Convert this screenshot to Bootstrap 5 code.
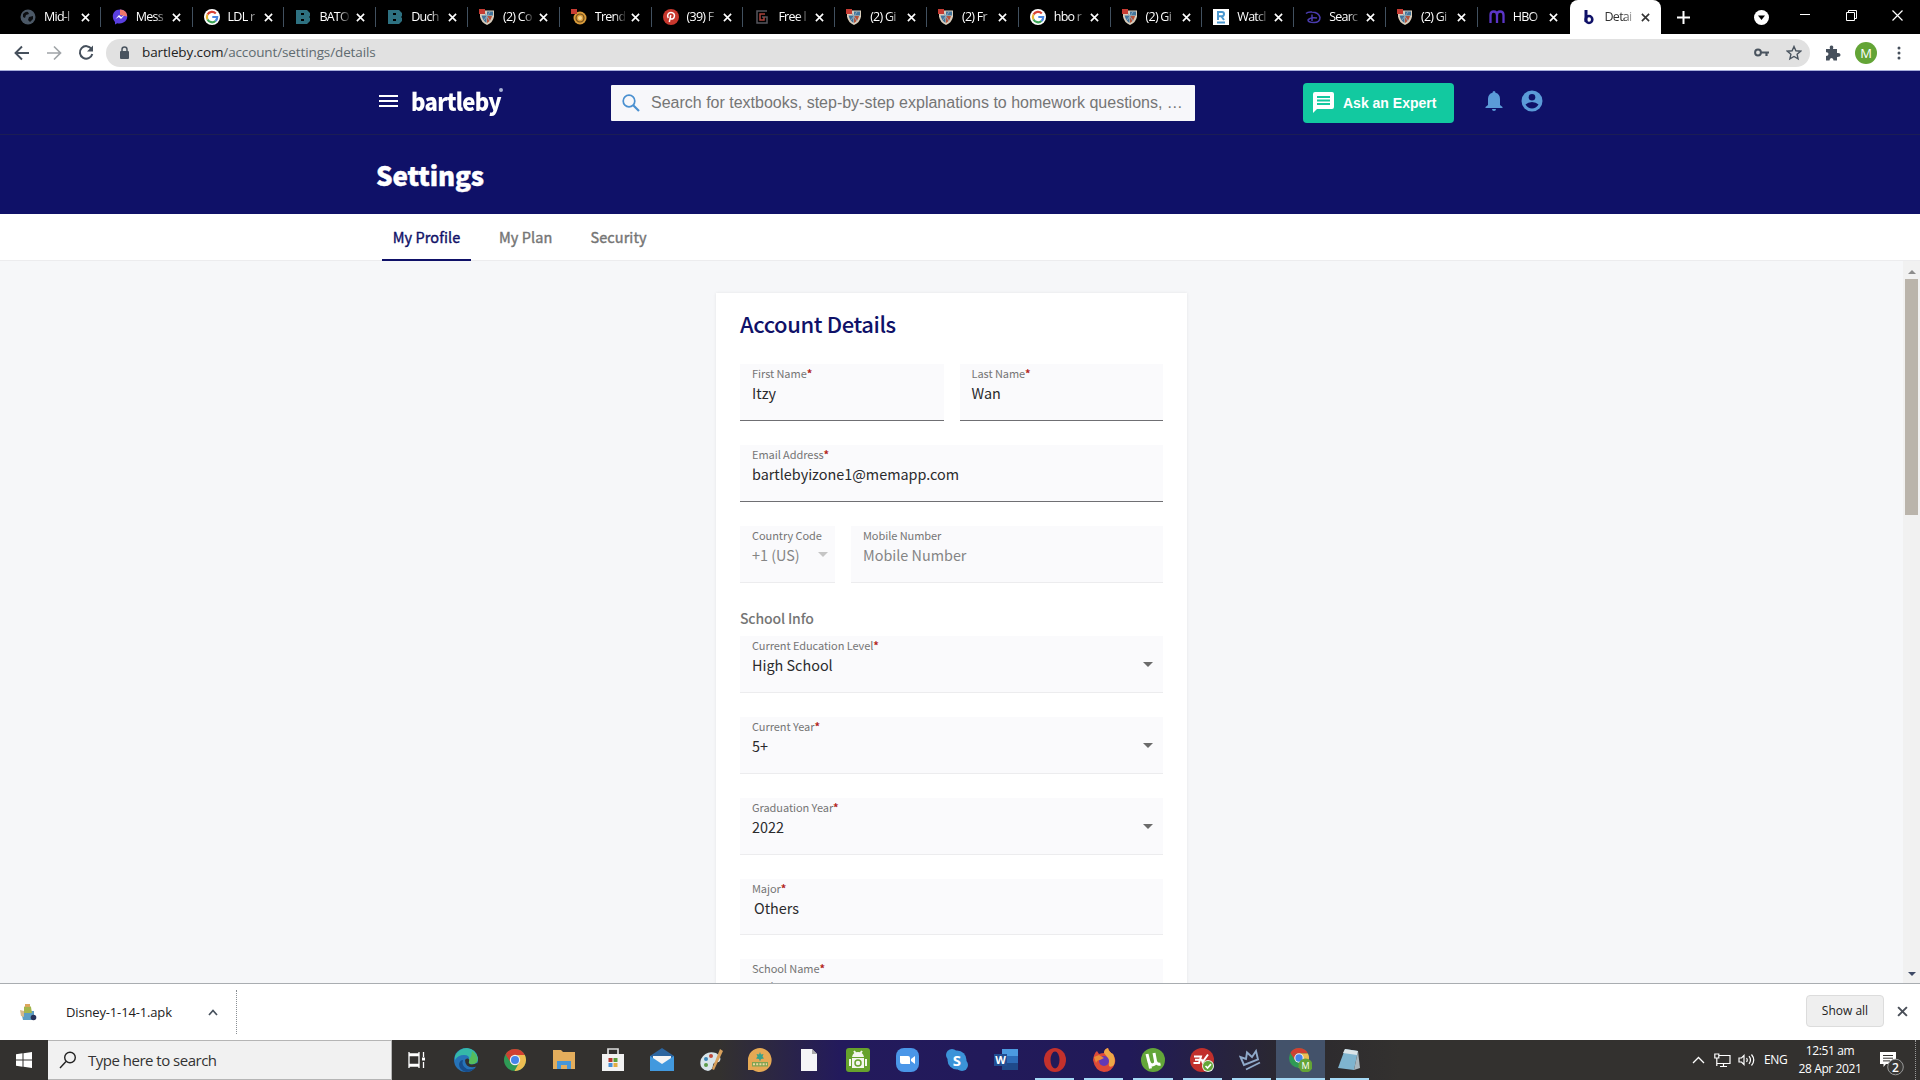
<!DOCTYPE html>
<html lang="en">
<head>
  <meta charset="UTF-8">
  <title>Details | bartleby</title>
  <link href="https://cdn.jsdelivr.net/npm/bootstrap@5.3.2/dist/css/bootstrap.min.css" rel="stylesheet">
  <style>
    body{width:1920px;height:1080px;overflow:hidden;background:#f6f7f9;font-family:"Noto Sans CJK SC",sans-serif;color:#222}
    svg{display:block;flex:none}
    .ui{font-family:"Open Sans","Noto Sans",sans-serif}

    /* browser */
    .tabstrip{height:34px;background:#000;padding-left:9px}
    .btab{width:91.8px;height:34px;padding-left:11px;color:#fff;font-size:12.5px;letter-spacing:-.75px;position:relative}
    .btab .fav{width:16px;height:16px;margin-right:8px}
    .btab .ttl{width:30px;height:20px;line-height:20px;overflow:hidden;white-space:nowrap;-webkit-mask-image:linear-gradient(90deg,#000 65%,rgba(0,0,0,.15));mask-image:linear-gradient(90deg,#000 65%,rgba(0,0,0,.15))}
    .btab .cls{margin-left:6.500px}
    .btab::after{content:"";position:absolute;right:0;top:7px;height:20px;width:1px;background:#41505f}
    .btab.on{background:#fff;color:#333;border-radius:8px 8px 0 0}
    .btab.on::after,.btab.last::after{display:none}
    .winbtns{padding-right:17px}
    .toolbar{height:37px;background:#fff;border-bottom:1px solid #a5addb;padding:1px 12px 0}
    .omni{width:1704px;height:28px;border-radius:14px;background:#e1e1e1;padding:0 8px 0 12px;font-size:13.5px;letter-spacing:-.12px;color:#5f6b70;margin-left:10px}
    .omni b{font-weight:400;color:#222}
    .avatar{width:22px;height:22px;border-radius:50%;background:#63a436;color:#fff;font-size:13px;line-height:22px}

    /* site */
    .sitehead{height:64px;background:#0f1168;border-bottom:1px solid #1b1d55;padding-left:379px}
    .logo{width:92px;height:30px;font-size:24px;font-weight:900;letter-spacing:-.8px;line-height:25px;color:#fff}
    .logo i{width:4px;height:4px;border-radius:50%;background:#a9b4d6}
    .logo span{transform:scaleX(.92);transform-origin:0 50%;width:88px}
    .sitesearch{width:584px;height:36px;background:#f7f7fa;border-radius:1px;font:16px/36px "Liberation Sans",sans-serif;color:#757575;padding-left:11px}
    .ask{width:151px;height:40px;border-radius:4px;background:#12c9a0;color:#fff;font:bold 14px "Liberation Sans",sans-serif;padding-left:10px}
    .titlebar{height:79px;background:#0f1168;padding-left:376px;font-size:26px;font-weight:900;line-height:80px;letter-spacing:-.15px;color:#fff;-webkit-text-stroke:.4px #fff}
    .subnav{height:47px;background:#fff;border-bottom:1px solid #ececee;padding-left:382px;font-size:14.5px;line-height:46px;color:#757575}
    .subnav a{color:inherit;text-decoration:none;-webkit-text-stroke:.4px currentColor;height:47px;white-space:nowrap;letter-spacing:.08px}
    .subnav .cur{color:#0f1168;width:89px;border-bottom:2px solid #0f1168}
    .page{height:722px;overflow:hidden}
    .panel{width:471px;height:760px;margin:32px 0 0 716px;background:#fff;padding:11px 24px 0;box-shadow:0 0 3px rgba(0,0,0,.08)}
    .panel h1{font-size:22px;font-weight:500;line-height:38px;letter-spacing:-.4px;color:#0f1168;margin:0 0 22px}
    .panel h2{font-size:14px;font-weight:500;line-height:20px;letter-spacing:-.15px;color:#757575;margin:0 0 8px;padding-top:1px}
    .fld{height:57px;background:#fafafc;border-bottom:1px solid #ececee;padding-left:12px;position:relative;margin-bottom:24px}
    .fld.dark{border-bottom-color:#6f6f73}
    .fld.low{height:56px}
    .fld.low label{line-height:17px;padding-top:.5px}
    .fld label{display:block;font-size:11px;line-height:18px;letter-spacing:-.06px;color:#757575}
    .fld label i{color:#b3261e;font-style:normal;font-weight:700}
    .fld div{font-size:14.4px;line-height:21px;color:#2a2a2c;white-space:nowrap}
    .fld.off div{color:#858585}
    .fld svg{position:absolute;right:10px;top:26px}
    .sbar{width:17px;background:#f1f1f1;padding:8px 0 6px}
    .sbar .thumb{width:13px;height:236px;background:#bab4ab;margin-top:5px}

    /* bottom */
    .dlbar{height:57px;background:#fff;border-top:1px solid #a9adb1;font-size:13px;color:#222}
    .dlbar .item{width:237px;height:44px;border-right:1px dotted #8a8f94;padding-left:20px}
    .showall{width:78px;height:32px;border:1px solid #dcdcdc;border-radius:4px;background:#efefef;font-size:12px}
    .taskbar{height:40px;background:linear-gradient(90deg,#33312f 720px,#231a5c 840px,#211a58 1130px,#2b292e 1290px,#33312f 1400px);color:#fff}
    .start{width:48px}
    .wsearch{width:344px;background:#f1f1f1;border:1px solid #b5b5b5;border-left:0;color:#333;font-size:15px;padding-left:11px}
    .app{width:49.1px;height:40px;position:relative}
    .app.run::after{content:"";position:absolute;left:5px;right:5px;bottom:0;height:2px;background:#a5d9f5}
    .app.act{background:#43526a}
    .app.act::after{left:0;right:0}
    .clock{width:80px;font-size:12px;line-height:18px;letter-spacing:-.4px;text-align:center;white-space:nowrap}
  </style>
</head>
<body>

<svg width="0" height="0" class="position-absolute">
  <symbol id="x" viewBox="0 0 10 10"><path d="M1 1l8 8M9 1L1 9" stroke="currentColor" stroke-width="1.8" fill="none"/></symbol>
  <symbol id="globe" viewBox="0 0 16 16"><circle cx="8" cy="8" r="7.5" fill="#4b5866"/><path d="M3 5q3-3 5-2l1 2-3 1-1 3-2-1zM9 8l4-1v3l-3 3-2-2z" fill="#0b0d10"/></symbol>
  <symbol id="mess" viewBox="0 0 16 16"><path d="M8 .5C3 .5.8 4 .8 7.500 .8 10 2 12 3 13v2.500l2.300-1.200C12 15.500 15.400 11 15.200 7.500 15 3.500 12.500.5 8 .5z" fill="#5a3fe0"/><path d="M8 .5c4.500 0 7 3 7.200 7L8 6z" fill="#f0776a"/><path d="M3.500 10l3.500-4 2.200 2 3.300-2-3.500 4-2.200-2z" fill="#fff"/></symbol>
  <symbol id="goog" viewBox="0 0 16 16"><circle cx="8" cy="8" r="8" fill="#fff"/><g fill="none" stroke-width="2.200"><path d="M11.800 4.400A5.200 5.200 0 0 0 3.500 5.500" stroke="#d94235"/><path d="M3.500 5.500a5.200 5.200 0 0 0 0 5" stroke="#eab530"/><path d="M3.500 10.500a5.200 5.200 0 0 0 8 1.500" stroke="#3da557"/><path d="M11.500 12A5.200 5.200 0 0 0 13.200 8H8.300" stroke="#4a86e0"/></g></symbol>
  <symbol id="bato" viewBox="0 0 16 16"><path d="M1 1h11l3 3v3l-1 1 1 1v3l-3 3H1zM6 4v2h3V4zM6 10v2h3v-2z" fill="#2e7181" fill-rule="evenodd"/></symbol>
  <symbol id="shield" viewBox="0 0 16 16"><path d="M1 1.500h14v6q-1 6-7 8.500Q2 13.500 1 7.500z" fill="#d9cdbb"/><path d="M2.500 6.500h5V14Q4 12 2.500 6.500zM8 2.500h6v4H8z" fill="#42749b"/><path d="M8 7h5q-1 5-5 7z" fill="#b7533b"/><path d="M5 3l6 9M11 3l-6 8" stroke="#88a9be"/><rect width="6" height="5" fill="#c63c33"/></symbol>
  <symbol id="trend" viewBox="0 0 16 16"><circle cx="9" cy="9" r="6.500" fill="#d99b3a"/><circle cx="9" cy="9" r="4" fill="none" stroke="#6e4c1b" stroke-width="1.200"/><circle cx="9" cy="9" r="2" fill="#f4d58f"/><rect width="6" height="5" fill="#c63c33"/></symbol>
  <symbol id="pin" viewBox="0 0 16 16"><circle cx="8" cy="8" r="8" fill="#c8372d"/><path d="M7.800 6l-1.500 7M5.300 9C3.500 6 5.500 3.500 8 3.500s4 2 3.300 4.200C10.500 10.500 8 10.500 7.300 9" fill="none" stroke="#fff" stroke-width="1.500"/></symbol>
  <symbol id="free" viewBox="0 0 16 16"><path d="M13 2H3v12h10V8H8" fill="none" stroke="#55565d" stroke-width="1.500"/><path d="M11 5H6v6h4V8" fill="none" stroke="#a9423b" stroke-width="1.500"/></symbol>
  <symbol id="watch" viewBox="0 0 16 16"><rect width="16" height="16" fill="#fff"/><path d="M5 11V3h4q2 0 2 2t-2 2.300H5M8.500 7.500L11 11M4 13.500h8" fill="none" stroke="#4a97cf" stroke-width="2"/></symbol>
  <symbol id="disney" viewBox="0 0 16 16"><path d="M1 4.500q2-2 6-1.500 7 .5 8 5.500 0 5-6 5-6 0-6-2.500Q5 8 12 9M7 5.500V12" fill="none" stroke="#4a3cae" stroke-width="1.500"/></symbol>
  <symbol id="hbo" viewBox="0 0 16 16"><path d="M1.500 14V6q0-3.500 3.200-3.500T8 6v8M8 6q0-3.500 3.200-3.500T14.500 6v8" fill="none" stroke="#5b35c7" stroke-width="2.300"/></symbol>
  <symbol id="bart" viewBox="0 0 16 16"><path d="M5 1v12" stroke="#0f1168" stroke-width="3"/><ellipse cx="8" cy="10.500" rx="3.300" ry="3.500" fill="none" stroke="#0f1168" stroke-width="2.600"/></symbol>
  <symbol id="caret" viewBox="0 0 10 5"><path d="M0 0h10L5 5z" fill="currentColor"/></symbol>
  <symbol id="chrome" viewBox="0 0 22 22"><circle cx="11" cy="11" r="11" fill="#2f9a55"/><path d="M1.500 5.500A11 11 0 0 1 20.800 6H11z" fill="#d23f31"/><path d="M20.800 6A11 11 0 0 1 10.500 22l5-9L13 6z" fill="#edbd52"/><path d="M1.500 5.500L7 14l4-8z" fill="#d23f31"/><circle cx="11" cy="11" r="5.200" fill="#f2f2f2"/><circle cx="11" cy="11" r="4" fill="#4684ea"/></symbol>
</svg>

<!-- Tab strip -->
<div class="tabstrip ui d-flex align-items-center">
  <div class="d-flex" id="tabs"></div>
  <svg class="ms-3" width="13" height="13" viewBox="0 0 13 13"><path d="M6.500 0v13M0 6.500h13" stroke="#fff" stroke-width="2"/></svg>
  <div class="winbtns d-flex align-items-center ms-auto">
    <svg width="15" height="15" viewBox="0 0 15 15"><circle cx="7.500" cy="7.500" r="7.500" fill="#fff"/><path d="M4 5.500h7L7.500 10z" fill="#000"/></svg>
    <svg class="mb-1" style="margin-left:31px" width="10" height="10" viewBox="0 0 10 10"><path d="M0 4.500h10" stroke="#fff"/></svg>
    <svg class="mb-1" style="margin-left:36px" width="11" height="11" viewBox="0 0 11 11"><path d="M.5 2.500h8v8h-8zM2.500 2.500v-2h8v8h-2" fill="none" stroke="#fff"/></svg>
    <svg class="mb-1" style="margin-left:35px" width="11" height="11" viewBox="0 0 11 11"><path d="M.5.500l10 10M10.500.500l-10 10" stroke="#fff" stroke-width="1.200"/></svg>
  </div>
</div>

<!-- Address bar -->
<div class="toolbar ui d-flex align-items-center">
  <svg width="20" height="20" viewBox="0 0 20 20" fill="none" stroke="#46505c" stroke-width="1.900"><path d="M17 10H4M10 3.500L3.500 10l6.500 6.500"/></svg>
  <svg style="margin-left:12px" width="20" height="20" viewBox="0 0 20 20" fill="none" stroke="#a0a4a8" stroke-width="1.700"><path d="M3 10h13M10 3.500l6.500 6.500-6.500 6.500"/></svg>
  <svg style="margin-left:12px" width="20" height="20" viewBox="0 0 20 20" fill="none" stroke="#46505c" stroke-width="2"><path d="M15.500 6A6.300 6.300 0 1 0 16.300 11"/><path d="M17 2.500V8.500h-6z" fill="#46505c" stroke="none"/></svg>
  <div class="omni d-flex align-items-center">
    <svg width="13" height="14" viewBox="0 0 13 14"><rect x="2" y="5" width="9" height="8" rx="1" fill="#4a545f"/><path d="M4 6V3.500a2.500 2.500 0 0 1 5 0V6" fill="none" stroke="#4a545f" stroke-width="1.500"/></svg>
    <span style="margin-left:11px"><b>bartleby.com</b>/account/settings/details</span>
    <svg class="ms-auto" width="15" height="9" viewBox="0 0 15 9"><circle cx="4" cy="4.500" r="2.900" fill="none" stroke="#4a545f" stroke-width="2"/><path d="M7 4.500h8M12.500 4v4" stroke="#4a545f" stroke-width="2.200"/></svg>
    <svg style="margin-left:17px" width="16" height="16" viewBox="0 0 16 16"><path d="M8 1.500l1.900 4.300 4.700.4-3.500 3.100 1 4.600L8 11.500l-4.100 2.400 1-4.600L1.400 6.200l4.700-.4z" fill="none" stroke="#4a545f" stroke-width="1.400"/></svg>
  </div>
  <svg style="margin-left:15px" width="16" height="16" viewBox="0 0 16 16"><path d="M1 4h4q-1-3.500 1.500-3.500T8 4h4v4q3.500-.5 3.500 1.800T12 12v3.500H8.500q0-2.500-2-2.500t-2 2.500H1V11q2.500 0 2.500-2T1 7.300z" fill="#46505c"/></svg>
  <div class="avatar text-center flex-shrink-0" style="margin-left:14px">M</div>
  <svg style="margin-left:20px" width="4" height="14" viewBox="0 0 4 14" fill="#46505c"><circle cx="2" cy="2" r="1.500"/><circle cx="2" cy="7" r="1.500"/><circle cx="2" cy="12" r="1.500"/></svg>
</div>

<!-- Site header -->
<div class="sitehead d-flex align-items-center">
  <svg class="mb-1" width="19" height="12" viewBox="0 0 19 12"><path d="M0 1h19M0 6h19M0 11h19" stroke="#fff" stroke-width="2"/></svg>
  <div class="logo d-flex" style="margin-left:13px"><span>bartleby</span><i></i></div>
  <div class="sitesearch d-flex align-items-center" style="margin-left:108px">
    <svg width="18" height="18" viewBox="0 0 18 18" fill="none" stroke="#4a90d0"><circle cx="7" cy="7" r="5.800" stroke-width="1.700"/><path d="M11 11l6 6" stroke-width="2.200"/></svg>
    <span style="margin-left:11px">Search for textbooks, step-by-step explanations to homework questions, …</span>
  </div>
  <div class="ask d-flex align-items-center" style="margin-left:108px">
    <svg width="21" height="21" viewBox="0 0 21 21"><path d="M2 0h17q2 0 2 2v13q0 2-2 2H4l-4 4V2q0-2 2-2z" fill="#fff"/><path d="M4 5h13M4 8.500h13M4 12h13" stroke="#12c9a0" stroke-width="1.800"/></svg>
    <span style="margin-left:9px">Ask an Expert</span>
  </div>
  <svg style="margin:0 0 3px 31px" width="18" height="20" viewBox="0 0 18 20" fill="#5b9bd8"><path d="M9 0q1.500 0 1.500 1.800Q15 3 15 8v6l2.500 2v1H.5v-1L3 14V8q0-5 4.500-6.200Q7.500 0 9 0zM7 18h4q0 2-2 2t-2-2z"/></svg>
  <svg style="margin:0 0 3px 18px" width="22" height="22" viewBox="0 0 22 22"><circle cx="11" cy="11" r="10.500" fill="#5b9bd8"/><circle cx="11" cy="7.300" r="3.300" fill="#0f1168"/><path d="M4.500 14.500Q7 12 11 12t6.500 2.500Q15 18.500 11 18.500t-6.500-4z" fill="#0f1168"/></svg>
</div>
<div class="titlebar">Settings</div>
<nav class="subnav d-flex">
  <a href="#" class="cur text-center">My Profile</a>
  <a href="#" style="margin-left:28px">My Plan</a>
  <a href="#" style="margin-left:38px">Security</a>
</nav>

<!-- Page -->
<div class="page d-flex justify-content-between">
  <div class="panel flex-shrink-0">
    <h1>Account Details</h1>
    <div class="d-flex gap-3">
      <div class="fld dark flex-fill w-50"><label>First Name<i>*</i></label><div>Itzy</div></div>
      <div class="fld dark flex-fill w-50"><label>Last Name<i>*</i></label><div>Wan</div></div>
    </div>
    <div class="fld dark"><label>Email Address<i>*</i></label><div>bartlebyizone1@memapp.com</div></div>
    <div class="d-flex gap-3">
      <div class="fld off flex-shrink-0" style="width:95px"><label>Country Code</label><div>+1 (US)</div><svg width="10" height="5" style="right:7px;color:#c5c5c5"><use href="#caret"/></svg></div>
      <div class="fld off flex-fill"><label>Mobile Number</label><div>Mobile Number</div></div>
    </div>
    <h2>School Info</h2>
    <div class="fld"><label>Current Education Level<i>*</i></label><div>High School</div><svg width="10" height="5" color="#6b6b6b"><use href="#caret"/></svg></div>
    <div class="fld"><label>Current Year<i>*</i></label><div>5+</div><svg width="10" height="5" color="#6b6b6b"><use href="#caret"/></svg></div>
    <div class="fld"><label>Graduation Year<i>*</i></label><div>2022</div><svg width="10" height="5" color="#6b6b6b"><use href="#caret"/></svg></div>
    <div class="fld low"><label>Major<i>*</i></label><div style="padding-left:2px">Others</div></div>
    <div class="fld low"><label>School Name<i>*</i></label><div style="padding-left:2px">Other</div></div>
  </div>
  <div class="sbar d-flex flex-column align-items-center">
    <svg width="8" height="5" viewBox="0 0 8 5"><path d="M0 5h8L4 1z" fill="#8c8c8c"/></svg>
    <div class="thumb"></div>
    <svg class="mt-auto" width="8" height="5" viewBox="0 0 8 5"><path d="M0 0h8L4 4z" fill="#3e4a66"/></svg>
  </div>
</div>

<!-- Downloads -->
<div class="dlbar ui d-flex align-items-center">
  <div class="item d-flex align-items-center">
    <svg width="17" height="17" viewBox="0 0 17 17"><path d="M1 7h13v9H3z" fill="#5d9ec4"/><path d="M4 3q4-4 7 0l1 6H4z" fill="#a3b64d"/><path d="M5 0h5v3H5z" fill="#dca65c"/><path d="M0 6l4 1v6l-3-1z" fill="#d7b98a"/><circle cx="13.500" cy="13.500" r="2.800" fill="#28335a"/></svg>
    <span style="width:126px;margin:1px 0 0 29px;letter-spacing:-.15px">Disney-1-14-1.apk</span>
    <svg style="margin-left:16px" width="10" height="7" viewBox="0 0 10 7"><path d="M1 6l4-4.500L9 6" fill="none" stroke="#46505c" stroke-width="1.700"/></svg>
  </div>
  <div class="showall d-flex align-items-center justify-content-center ms-auto" style="margin-bottom:2px">Show all</div>
  <svg style="margin:0 12px 2px 13px;color:#4a4f58" width="11" height="11"><use href="#x"/></svg>
</div>

<!-- Taskbar -->
<div class="taskbar ui d-flex">
  <div class="start d-flex align-items-center justify-content-center">
    <svg width="16" height="16" viewBox="0 0 16 16" fill="#fff"><path d="M0 2.200l6.500-.9v6.200H0zM7.500 1.200L16 0v7.500H7.500zM0 8.500h6.500v6.200L0 13.800zM7.500 8.500H16V16l-8.500-1.200z"/></svg>
  </div>
  <div class="wsearch d-flex align-items-center">
    <svg width="18" height="18" viewBox="0 0 18 18" fill="none" stroke="#222" stroke-width="1.400"><circle cx="11" cy="6.500" r="5.300"/><path d="M7 10.500L1 17"/></svg>
    <span style="margin-left:11px;letter-spacing:-.5px">Type here to search</span>
  </div>
  <div class="d-flex" id="apps"></div>
  <div class="d-flex align-items-center ms-auto">
    <svg width="13" height="8" viewBox="0 0 13 8"><path d="M1 7l5.500-5.500L12 7" fill="none" stroke="#fff" stroke-width="1.300"/></svg>
    <svg style="margin-left:9px" width="17" height="15" viewBox="0 0 17 15" fill="none" stroke="#fff" stroke-width="1.200"><path d="M5 2.500h11v8H3M9.500 10.500v3M6 13.500h7M.8 1h4v4h-4zM2.800 5v8"/></svg>
    <svg style="margin-left:7px" width="17" height="14" viewBox="0 0 17 14" fill="none" stroke="#fff" stroke-width="1.200"><path d="M1 5h2.500L6 2.500v9L3.500 9H1zM8.500 5q1.500 2 0 4M11 3.200q3 3.800 0 7.600M13.500 1.500q4.500 5.500 0 11"/></svg>
    <span style="width:24px;margin-left:9px;font-size:12px;letter-spacing:-.3px">ENG</span>
    <div class="clock" style="margin-left:2px">12:51 am<br>28 Apr 2021</div>
    <svg style="margin:6px 11px 0 10px" width="24" height="25" viewBox="0 0 24 25"><path d="M0 1h16v12H6l-2.500 3v-3H0z" fill="#fff"/><path d="M3 4.500h10M3 7.200h10M3 9.900h7" stroke="#33312f"/><circle cx="15.500" cy="16" r="7.800" fill="#3a3937" stroke="#999"/><text x="15.500" y="20.500" text-anchor="middle" font-size="12" font-weight="600" fill="#fff">2</text></svg>
    <div style="width:5px;height:40px;border-left:1px dotted #999"></div>
  </div>
</div>

<script>
const tabs = [
  ['globe', 'Mid-l'], ['mess', 'Mess'], ['goog', 'LDL r'], ['bato', 'BATO'], ['bato', 'Duch'],
  ['shield', '(2) Co'], ['trend', 'Trend'], ['pin', '(39) F'], ['free', 'Free l'], ['shield', '(2) Gi'],
  ['shield', '(2) Fr'], ['goog', 'hbo r'], ['shield', '(2) Gi'], ['watch', 'Watcl'], ['disney', 'Searc'],
  ['shield', '(2) Gi'], ['hbo', 'HBO'], ['bart', 'Detai']
];
document.getElementById('tabs').innerHTML = tabs.map(([icon, title], i) => `
  <div class="btab d-flex align-items-center ${i === 17 ? 'on' : ''} ${i === 16 ? 'last' : ''}">
    <svg class="fav"><use href="#${icon}"/></svg>
    <span class="ttl">${title}</span>
    <svg class="cls" width="9" height="9"><use href="#x"/></svg>
  </div>`).join('');

// taskbar icons, 24x24 each; second value is the state class
const apps = [
  ['<path d="M4 7.500h10v9H4zM4 4v2h10V4M4 20v-2h10v2M18.500 4v5M18.500 14v6" fill="none" stroke="#fff" stroke-width="1.300"/><path d="M17 9.500h3v3h-3z" fill="#fff"/>', ''],
  ['<circle cx="12" cy="12" r="12" fill="#2673b8"/><path d="M1 8Q5 0 13 0q9 1 11 10 0 6-7 6-4-1-2-4 1-5-5-5-6 0-9 5z" fill="#35b8a8"/><path d="M9 12q-2 6 4 9 4 1 8-1-4 4-9 4-7-2-7-8 1-4 4-4z" fill="#174d8c"/><path d="M18 3q7 5 5 11-3 3-7 2-3-1-1-4 3-4 3-9z" fill="#55bd5c"/><path d="M11 12q1-2 3-1.500 2 1 1 3-1 2 2 3 3 .5 7-2l-1 4q-7 2-10-1-2-2-2-5.500z" fill="#33312f"/>', ''],
  ['<use href="#chrome" x="1" y="1" width="22" height="22"/>', ''],
  ['<path d="M1 2h8l2 2h12v17H1z" fill="#e3ad5c"/><path d="M5 13h14v8h-4v-4H9v4H5z" fill="#4796d8"/>', ''],
  ['<path d="M7 6V1h10v5" fill="none" stroke="#ddd" stroke-width="1.700"/><path d="M1 6h22v17H1z" fill="#f2f2f2"/><path d="M7.500 10h4v4h-4z" fill="#b8382f"/><path d="M12.500 10h4v4h-4z" fill="#5b9e3a"/><path d="M7.500 15h4v4h-4z" fill="#4690d8"/><path d="M12.500 15h4v4h-4z" fill="#e3ad42"/>', ''],
  ['<path d="M0 8l12-8 12 8v15H0z" fill="#2c659f"/><path d="M3 8h18v8H3z" fill="#f5f5f5"/><path d="M0 8l12 8 12-8v15H0z" fill="#4299de"/>', ''],
  ['<path d="M2 11Q7 2 17 5q7 5 3 9-6 0-6 3 0 5-5 6-10-2-7-12z" fill="#d8e5ea"/><circle cx="7" cy="11" r="2" fill="#3d86b7"/><circle cx="12" cy="8" r="2" fill="#c04b3c"/><circle cx="7" cy="17" r="2" fill="#5c9c4a"/><path d="M21 1l3 2-9 19-2-1z" fill="#d9a15c"/>', ''],
  ['<path d="M12 0a12 12 0 1 1-7 22H0V12A12 12 0 0 1 12 0z" fill="#e6a954"/><path d="M12 4l1 2.500 2.500-.5-1 2.500 1.500 2-3 .5-1 2.500-1-2.500-3-.5 1.500-2-1-2.500 2.500.5z" fill="#38a18a"/><path d="M4 14h16v4.500H4z" fill="#7fa353"/><path d="M5 16.200h14" stroke="#efd79c" stroke-width="2" stroke-dasharray="2 1.200"/>', ''],
  ['<path d="M4 1h11l5 5v17H4z" fill="#f5f5f7"/><path d="M15 1v5h5z" fill="#aaa"/>', ''],
  ['<rect width="24" height="24" rx="3" fill="#66a22c"/><path d="M6 9q1-5 6-5t6 5zM6 10h12v10H6z" fill="#f3f6ee"/><path d="M4 11v7M20 11v7M8 3l1.500 2M16 3l-1.500 2" stroke="#f3f6ee" stroke-width="2"/><circle cx="12" cy="15" r="3" fill="none" stroke="#66a22c" stroke-width="1.500"/>', ''],
  ['<rect x="1" y="0" width="23" height="24" rx="8" fill="#4a96e8"/><path d="M5 8h8q2 0 2 2v6H7q-2 0-2-2zM16 11l4-3v8l-4-3z" fill="#fff"/>', ''],
  ['<circle cx="12" cy="12" r="9.500" fill="#3b93d8"/><circle cx="7" cy="7" r="6" fill="#3b93d8"/><circle cx="17" cy="17" r="6" fill="#3b93d8"/><text x="12" y="17.500" text-anchor="middle" font-size="15" font-weight="700" fill="#fff">S</text>', ''],
  ['<path d="M8 1h16v7H8z" fill="#4c9ae0"/><path d="M8 8h16v7H8z" fill="#2d6cb8"/><path d="M8 15h16v7H8z" fill="#1f4a8a"/><path d="M0 6h13v12H0z" fill="#214e93"/><text x="6.500" y="16" text-anchor="middle" font-size="11" font-weight="700" fill="#fff">W</text>', ''],
  ['<ellipse cx="12" cy="12" rx="11" ry="12" fill="#c3312c"/><ellipse cx="12" cy="12" rx="4.500" ry="8.500" fill="#211a58"/>', 'run'],
  ['<path d="M1 12Q2 5 5 3l2 3q3-1 5-1 0-4 4-5 1 4 5 6 3 5 2 9-3 9-11 9-9-1-11-12z" fill="#dd4a38"/><path d="M16 0q1 4 5 6 3 6 1 11-3 3-5 1 0-8-5-13 0-4 4-5z" fill="#eda847"/><circle cx="12" cy="13" r="5" fill="#6339b6"/><path d="M2 9l5-2 5 3-4 2q-3 0-4 3z" fill="#e98b38"/>', 'run'],
  ['<circle cx="12" cy="12" r="12" fill="#63a639"/><path d="M6 6l2 8q1 3.500 4 2.800T14.500 13L13 5M14.500 13q1 4 5 3M8.500 15.500l1 5" fill="none" stroke="#fff" stroke-width="3"/>', 'run'],
  ['<circle cx="12" cy="12" r="12" fill="#c1302c"/><path d="M4 8.500h7L9 15H3.500M5 11.800h4.500M18 6.500L12.500 14l-1-3" fill="none" stroke="#fff" stroke-width="2"/><circle cx="18" cy="18" r="6" fill="#e8f3e6"/><circle cx="18" cy="18" r="5" fill="#63a639"/><path d="M15.500 18l2 2 3.500-3.800" fill="none" stroke="#fff" stroke-width="1.700"/>', 'run'],
  ['<path d="M5 17L1.500 9l5.500 2 1-6.500 5 4.500 4-6 2 8.500zM7 21.500l14-7" fill="none" stroke="#8fa9c9" stroke-width="1.900"/>', 'run'],
  ['<use href="#chrome" x="1" y="0" width="20" height="20"/><circle cx="17.500" cy="17.500" r="7" fill="#63a436"/><text x="17.500" y="21" text-anchor="middle" font-size="9" fill="#fff">M</text>', 'run act'],
  ['<path d="M8 1l13 2-4 19L1 20z" fill="#7fb4cf"/><path d="M8 1l13 2-1 4L6 5z" fill="#dbe4e8"/><path d="M17 22l4-19 2 17-3 1z" fill="#aab6bd"/>', 'run']
];
document.getElementById('apps').innerHTML = apps.map(([art, state]) => `
  <div class="app ${state} d-flex align-items-center justify-content-center">
    <svg width="24" height="24" viewBox="0 0 24 24">${art}</svg>
  </div>`).join('');
</script>

<script src="https://cdn.jsdelivr.net/npm/bootstrap@5.3.2/dist/js/bootstrap.bundle.min.js"></script>
</body>
</html>
